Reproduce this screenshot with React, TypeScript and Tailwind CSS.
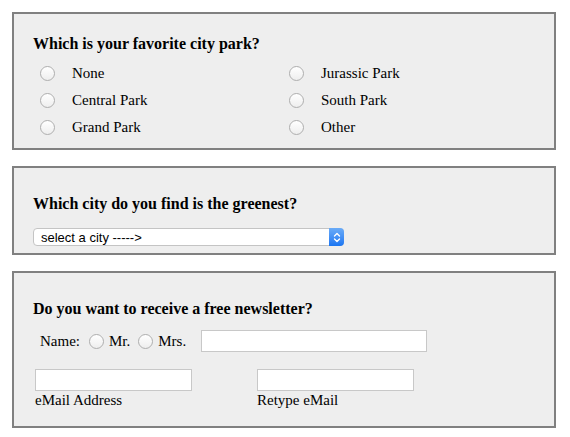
import React from 'react';

function Radio() {
  return (
    <span className="block w-[15px] h-[15px] shrink-0 rounded-full border border-[#aeaeae] bg-linear-to-b from-white to-[#eeeeee]" />
  );
}

function TextBox({ className }: { className: string }) {
  return <input type="text" className={`h-[22px] border border-[#c8c8c8] bg-white outline-none ${className}`} />;
}

const parks = [
  ['None', 'Jurassic Park'],
  ['Central Park', 'South Park'],
  ['Grand Park', 'Other'],
];

export default function App() {
  return (
    <div className="pt-3 pl-3 text-black font-['Liberation_Serif','Times_New_Roman',serif]">
      {/* Favorite park */}
      <div className="w-[544px] border-2 border-[#808080] bg-[#eeeeee] px-[19px] pt-[20px] pb-[7px]">
        <h2 className="h-[20px] text-[16px] leading-[20px] font-bold">Which is your favorite city park?</h2>
        <div className="mt-[6px] grid grid-cols-[249px_1fr]">
          {parks.map((row) =>
            row.map((label) => (
              <label key={label} className="flex h-[27px] items-center pl-[7px] text-[15px]">
                <Radio />
                <span className="ml-[17px]">{label}</span>
              </label>
            ))
          )}
        </div>
      </div>

      {/* Greenest city */}
      <div className="mt-[16px] w-[544px] border-2 border-[#808080] bg-[#eeeeee] px-[19px] pt-[26px] pb-[7px]">
        <h2 className="h-[20px] text-[16px] leading-[20px] font-bold">Which city do you find is the greenest?</h2>
        <div className="mt-[14px] flex h-[18px] w-[311px] items-center rounded-[4px] border border-[#c4c4c4] bg-white font-['Liberation_Sans',Arial,sans-serif] text-[13px]">
          <span className="flex-1 pl-[7px] leading-none">select a city -----&gt;</span>
          <span className="flex h-[18px] w-[15px] -mr-px items-center justify-center rounded-r-[4px] bg-linear-to-b from-[#6aabf7] to-[#1a76f2]">
            <svg width="8" height="11" viewBox="0 0 8 11" fill="none" stroke="white" strokeWidth="1.4" strokeLinecap="round" strokeLinejoin="round">
              <path d="M1.5 4 L4 1.5 L6.5 4" />
              <path d="M1.5 7 L4 9.5 L6.5 7" />
            </svg>
          </span>
        </div>
      </div>

      {/* Newsletter */}
      <div className="mt-[16px] w-[544px] border-2 border-[#808080] bg-[#eeeeee] px-[19px] pt-[26px] pb-[17px]">
        <h2 className="h-[20px] text-[16px] leading-[20px] font-bold">Do you want to receive a free newsletter?</h2>
        <div className="mt-[11px] flex h-[22px] items-center text-[15px]">
          <span className="ml-[7px]">Name:</span>
          <span className="ml-[9px] flex items-center"><Radio /></span>
          <span className="ml-[5px]">Mr.</span>
          <span className="ml-[8px] flex items-center"><Radio /></span>
          <span className="ml-[5px]">Mrs.</span>
          <TextBox className="ml-[15px] w-[226px]" />
        </div>
        <div className="mt-[17px] flex text-[15px]">
          <div className="ml-[2px] flex w-[157px] flex-col">
            <TextBox className="w-[157px]" />
            <span className="h-[18px] leading-[18px]">eMail Address</span>
          </div>
          <div className="ml-[65px] flex w-[157px] flex-col">
            <TextBox className="w-[157px]" />
            <span className="h-[18px] leading-[18px]">Retype eMail</span>
          </div>
        </div>
      </div>
    </div>
  );
}
